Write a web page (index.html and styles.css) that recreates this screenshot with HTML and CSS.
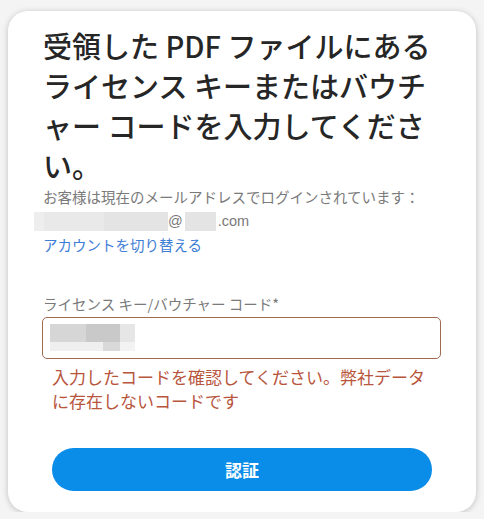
FILE: index.html
```html
<!DOCTYPE html>
<html lang="ja">
<head>
    <meta charset="UTF-8">
    <meta name="viewport" content="width=device-width, initial-scale=1.0">
    <title>ライセンス キーの入力</title>
    <link rel="stylesheet" href="styles.css">
</head>
<body>

<div class="card">
    <h1 class="title">受領した PDF ファイルにあるライセンス キーまたはバウチャー コードを入力してください。</h1>

    <p class="account-note">お客様は現在のメールアドレスでログインされています：</p>
    <div class="email-line">
        <span class="blur blur-user"><i class="b1"></i><i class="b2"></i><i class="b3"></i></span>
        <span class="at">@</span>
        <span class="blur blur-domain"></span>
        <span class="tld">.com</span>
    </div>
    <a href="#" class="switch-link">アカウントを切り替える</a>

    <!-- コード入力欄 -->
    <label class="field-label" for="codeInput">ライセンス キー/バウチャー コード*</label>
    <div class="code-input" id="codeInput">
        <div class="blur-code">
            <div class="row top"><i class="c1"></i><i class="c2"></i><i class="c3"></i></div>
            <div class="row bottom"><i class="c4"></i><i class="c5"></i><i class="c6"></i></div>
        </div>
    </div>
    <p class="error-text">入力したコードを確認してください。弊社データに存在しないコードです</p>

    <button class="submit-button">認証</button>
</div>

</body>
</html>
```

FILE: styles.css
```css
body {
    margin: 0;
    background-color: #f4f4f4;
    font-family: "Noto Sans CJK JP", "Noto Sans", sans-serif;
}
.card {
    width: 468px;
    margin: 11px 8px 0;
    box-sizing: border-box;
    padding: 14px 35px 21px 35px;
    background-color: #fff;
    border-radius: 20px;
    box-shadow: 0 1px 6px rgba(0, 0, 0, 0.22);
    display: flex;
    flex-direction: column;
    align-items: flex-start;
}
.title {
    margin: 0;
    font-size: 29px;
    line-height: 40px;
    font-weight: 500;
    color: #262626;
    width: 398px;
}
.account-note {
    margin: 0;
    font-size: 14.5px;
    line-height: 24px;
    color: #7a7a7a;
}
.email-line {
    display: flex;
    align-items: center;
    height: 24px;
    font-size: 14.5px;
    color: #7a7a7a;
    margin-left: -9px;
}
.blur {
    display: flex;
    height: 19px;
}
.blur i {
    display: block;
    height: 100%;
}
.blur-user .b1 { width: 10px; background-color: #eeeeee; }
.blur-user .b2 { width: 60px; background-color: #e9e9e9; }
.blur-user .b3 { width: 64px; background-color: #e4e4e4; }
.blur-domain {
    width: 31px;
    margin-left: 2px;
    background-color: #e4e4e4;
}
.at, .tld {
    font-family: "Liberation Sans", Arial, sans-serif;
}
.tld {
    margin-left: 2px;
}
.switch-link {
    font-size: 14.5px;
    line-height: 24px;
    color: #3f7ed6;
    text-decoration: none;
}
.field-label {
    margin: 35px 0 0 0;
    font-size: 14.5px;
    line-height: 24px;
    color: #7a7a7a;
}
.code-input {
    margin: 1px 0 0 -1px;
    width: 399px;
    height: 42px;
    box-sizing: border-box;
    border: 1px solid #a06a50;
    border-radius: 5px;
    padding: 6px 0 0 7px;
}
.blur-code .row {
    display: flex;
}
.blur-code .top { height: 18px; }
.blur-code .bottom { height: 9px; }
.blur-code i { display: block; height: 100%; }
.c1 { width: 36px; background-color: #d6d6d6; }
.c2 { width: 34px; background-color: #c9c9c9; }
.c3 { width: 15px; background-color: #e6e6e6; }
.c4 { width: 53px; background-color: #efefef; }
.c5 { width: 17px; background-color: #d9d9d9; }
.c6 { width: 15px; background-color: #f3f3f3; }
.error-text {
    margin: 6px 0 0 9px;
    width: 389px;
    font-size: 17px;
    line-height: 24px;
    color: #b8553d;
}
.submit-button {
    margin: 35px 0 0 9px;
    width: 380px;
    height: 43px;
    border: none;
    border-radius: 22px;
    background-color: #0a8ce9;
    color: #fff;
    font-family: "Noto Sans CJK JP", sans-serif;
    font-size: 17px;
    font-weight: 700;
    cursor: pointer;
}
```
